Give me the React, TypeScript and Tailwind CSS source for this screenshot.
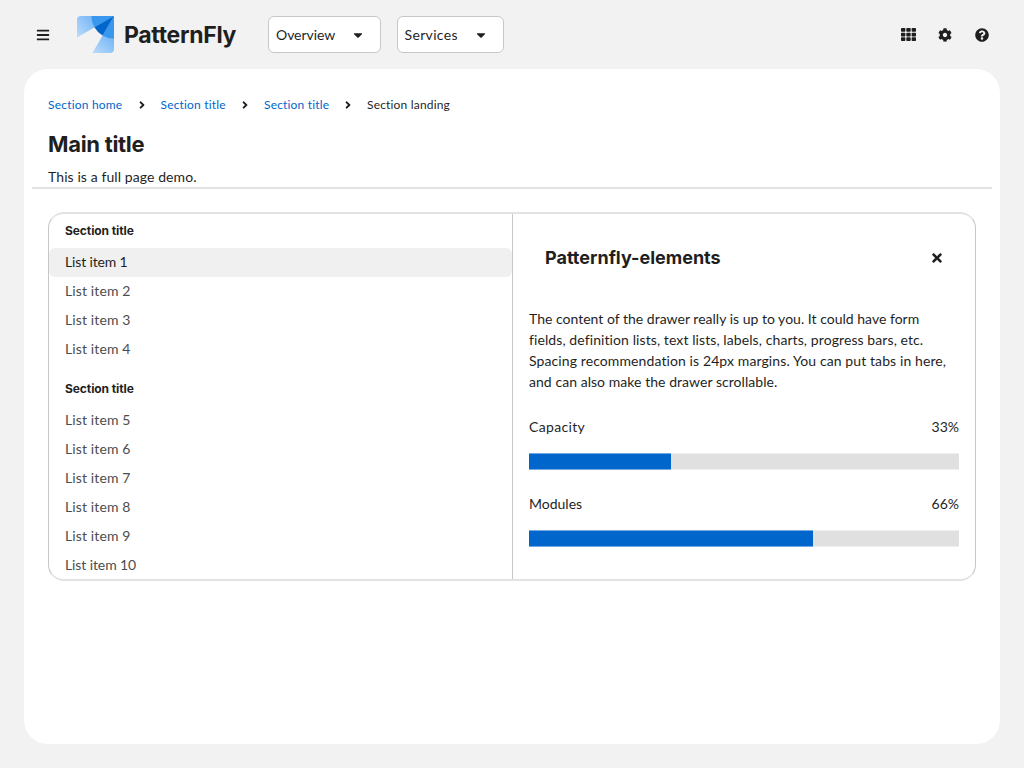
import {
  FaAngleRight,
  FaBars,
  FaCaretDown,
  FaCog,
  FaQuestionCircle,
  FaTh,
  FaTimes,
} from "react-icons/fa";

function Logo() {
  return (
    <svg width="37" height="37" viewBox="0 0 37 37" aria-hidden="true">
      <defs>
        <linearGradient id="wing-left" x1="0" y1="20" x2="20" y2="3" gradientUnits="userSpaceOnUse">
          <stop offset="0" stopColor="#b9dafc" />
          <stop offset="1" stopColor="#6fb4f5" />
        </linearGradient>
        <linearGradient id="wing-right" x1="17" y1="37" x2="35" y2="18" gradientUnits="userSpaceOnUse">
          <stop offset="0" stopColor="#b9dafc" />
          <stop offset="1" stopColor="#6fb4f5" />
        </linearGradient>
      </defs>
      <path d="M4 0H37L0 21.4V4A4 4 0 0 1 4 0Z" fill="url(#wing-left)" />
      <path d="M37 0V33A4 4 0 0 1 33 37H15.4Z" fill="url(#wing-right)" />
      <path d="M37 0H14.4A22.6 22.6 0 0 0 17.4 11.3Z" fill="#3998ee" />
      <path d="M37 0V22.6A22.6 22.6 0 0 1 25.6 19.5Z" fill="#3998ee" />
      <path d="M37 0L17.4 11.3A22.6 22.6 0 0 0 25.6 19.5Z" fill="#0066cc" />
    </svg>
  );
}

function Dropdown({ label, size, text }: { label: string; size: string; text: string }) {
  return (
    <button
      className={`flex h-[37px] shrink-0 items-center justify-between rounded-md border border-[#c7c7c7] bg-white pl-[7px] pr-[15px] ${size}`}
    >
      <span className={`text-sm ${text}`}>{label}</span>
      <FaCaretDown size={14} />
    </button>
  );
}

function Separator() {
  return (
    <span className="flex w-[37.5px] justify-center">
      <FaAngleRight size={12} />
    </span>
  );
}

function itemStyle(n: number, active?: number) {
  if (n === active) return "bg-[#f0f0f0] tracking-[-0.15px]";
  if (n === 10) return "text-[#4d4d4d] tracking-[-0.1px]";
  return "text-[#4d4d4d] tracking-[0.12px]";
}

function MenuGroup({ items, active, className }: { items: number[]; active?: number; className: string }) {
  return (
    <section className={className}>
      <h2 className="flex items-center px-4 font-[Inter,sans-serif] text-xs font-bold leading-[34px] tracking-[-0.08px]">
        Section title
      </h2>
      <ul>
        {items.map((n) => (
          <li key={n} className={`h-[29px] rounded-md px-4 text-sm leading-[28px] ${itemStyle(n, active)}`}>
            List item {n}
          </li>
        ))}
      </ul>
    </section>
  );
}

function Meter({ label, value, fill, text }: { label: string; value: number; fill: string; text: string }) {
  return (
    <div>
      <div className="flex h-[21px] items-center justify-between text-sm">
        <span className={text}>{label}</span>
        <span>{value}%</span>
      </div>
      <div className="mt-4 h-[17px] border-y border-[#efefef] bg-[#e0e0e0]">
        <div className={`-my-px h-[17px] border-y border-[#73a8e0] bg-[#0066cc] ${fill}`} />
      </div>
    </div>
  );
}

export default function App() {
  return (
    <div className="flex h-screen w-full flex-col overflow-hidden bg-[#f2f2f2] px-6 pb-6 font-[Lato,sans-serif] text-[#1f1f1f]">
      <header className="flex h-[69px] shrink-0 items-center pl-[11.5px] pr-[11.5px]">
        <button aria-label="Menu" className="mr-[27.5px]">
          <FaBars size={14} />
        </button>
        <Logo />
        <span className="ml-2.5 w-[144px] font-[Inter,sans-serif] text-[23px] font-bold leading-7 tracking-[-0.3px]">
          PatternFly
        </span>
        <Dropdown label="Overview" size="w-[112.5px]" text="tracking-[-0.05px]" />
        <span className="w-4" />
        <Dropdown label="Services" size="w-[107px]" text="tracking-[0.35px]" />
        <div className="ml-auto flex items-center gap-[22.5px]">
          <FaTh size={15} />
          <FaCog size={14} />
          <FaQuestionCircle size={14} />
        </div>
      </header>

      <main className="flex-1 rounded-3xl bg-white px-2 pt-[26px]">
        <div className="h-[94px] border-b-2 border-[#e2e2e2] px-4">
          <nav className="flex h-5 items-center text-xs">
            <a className="w-[75px] whitespace-nowrap tracking-[0.2px] text-[#0066cc]">Section home</a>
            <Separator />
            <a className="w-[66px] whitespace-nowrap tracking-[0.17px] text-[#0066cc]">Section title</a>
            <Separator />
            <a className="w-[65.5px] whitespace-nowrap tracking-[0.17px] text-[#0066cc]">Section title</a>
            <Separator />
            <span className="whitespace-nowrap tracking-[0.18px]">Section landing</span>
          </nav>
          <h1 className="mt-[15px] font-[Inter,sans-serif] text-[22px] font-bold leading-7 tracking-[-0.3px]">
            Main title
          </h1>
          <p className="mt-[9px] text-sm leading-5 tracking-[0.09px]">This is a full page demo.</p>
        </div>

        <div className="mx-4 mt-[23px] flex h-[369px] overflow-hidden rounded-2xl border-x border-y-2 border-x-[#c7c7c7] border-y-[#e2e2e2]">
          <div className="w-[463px] shrink-0">
            <MenuGroup items={[1, 2, 3, 4]} active={1} className="" />
            <MenuGroup items={[5, 6, 7, 8, 9, 10]} className="pt-2" />
          </div>
          <aside className="flex-1 border-l border-[#c7c7c7] px-4 pt-[29px]">
            <div className="flex h-[30px] items-center justify-between pl-4 pr-[15.5px]">
              <h2 className="font-[Inter,sans-serif] text-lg font-bold">Patternfly-elements</h2>
              <button aria-label="Close">
                <FaTimes size={14} />
              </button>
            </div>
            <p className="mt-[35px] whitespace-nowrap text-sm leading-[21px]">
              <span className="tracking-[0.01px]">The content of the drawer really is up to you. It could have form</span>
              <br />
              <span className="tracking-[0.09px]">fields, definition lists, text lists, labels, charts, progress bars, etc.</span>
              <br />
              <span className="tracking-[0.1px]">Spacing recommendation is 24px margins. You can put tabs in here,</span>
              <br />
              <span className="tracking-[0.05px]">and can also make the drawer scrollable.</span>
            </p>
            <div className="mt-6 flex flex-col gap-[23px]">
              <Meter label="Capacity" value={33} fill="w-[33%]" text="tracking-[0.33px]" />
              <Meter label="Modules" value={66} fill="w-[66%]" text="" />
            </div>
          </aside>
        </div>
      </main>
    </div>
  );
}
